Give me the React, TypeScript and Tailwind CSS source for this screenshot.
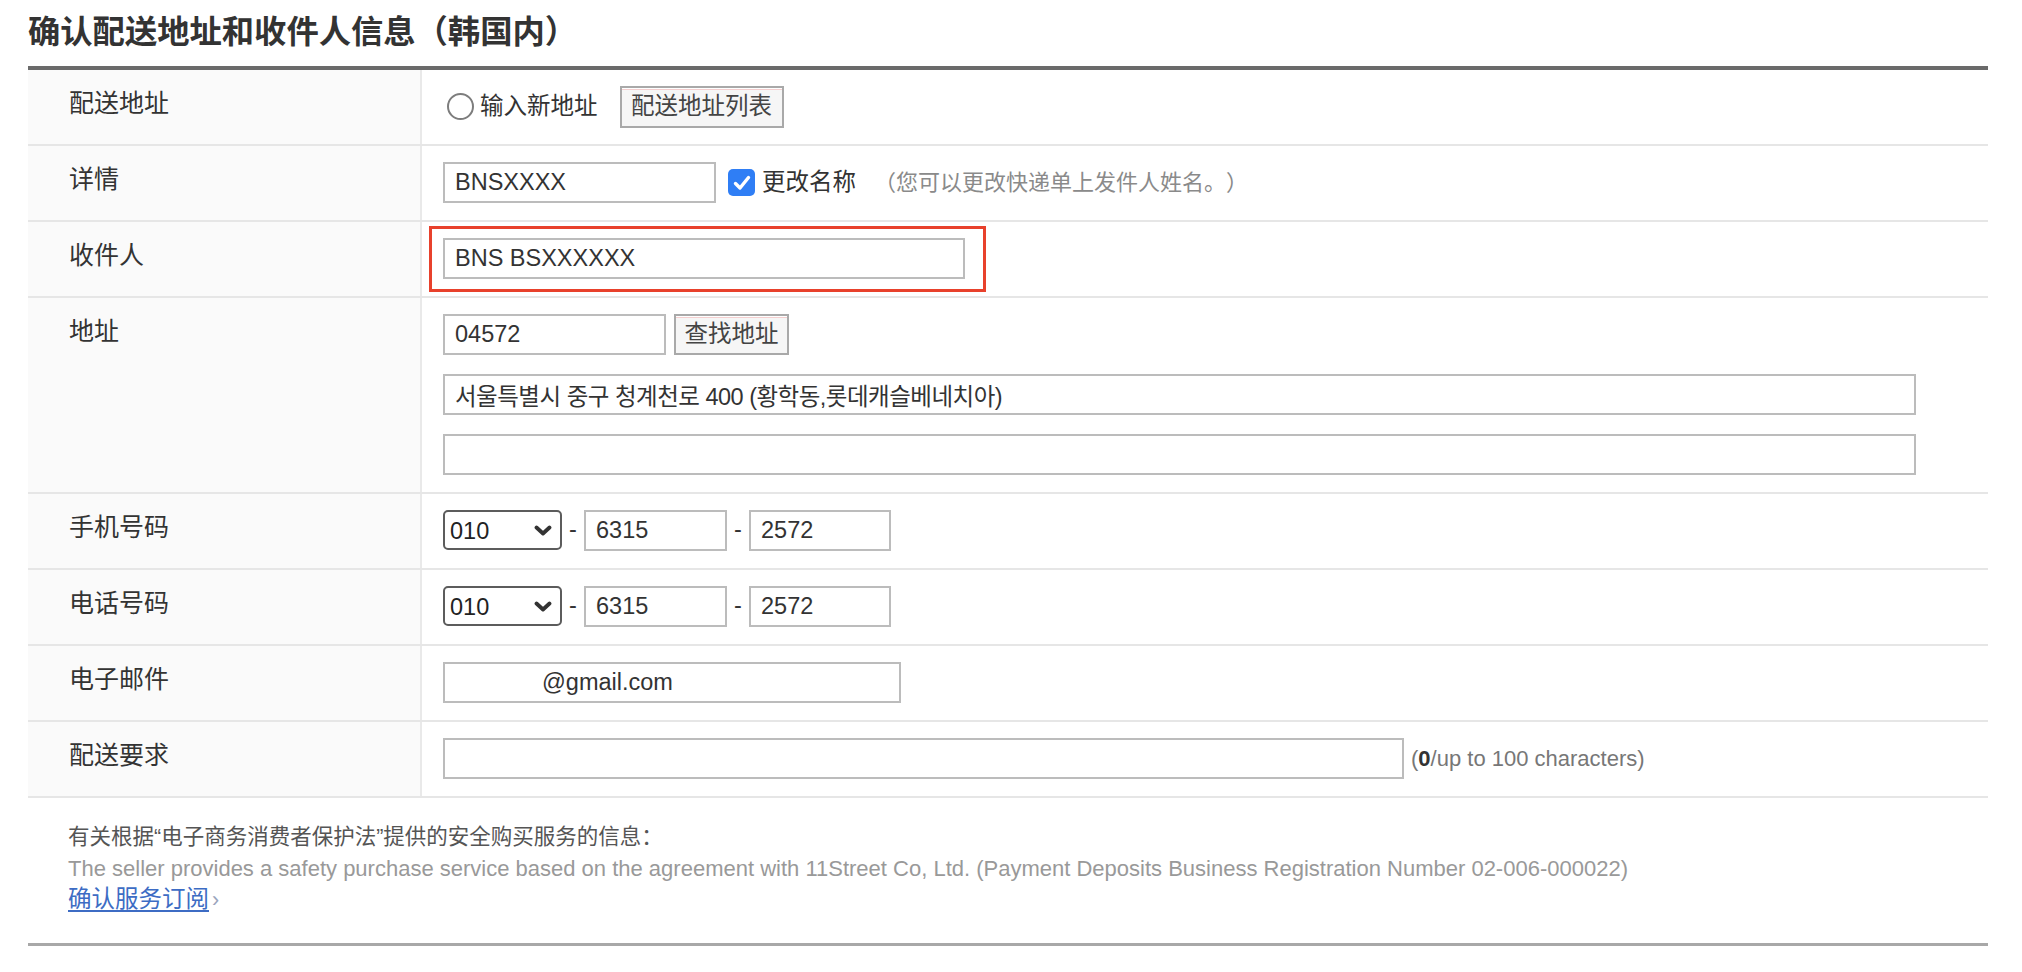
import React from "react";

const FONT = { fontFamily: '"Liberation Sans", "Noto Sans CJK SC", "Noto Sans CJK KR", sans-serif' };

function Label({ children }: { children: React.ReactNode }) {
  return (
    <div className="w-[394px] shrink-0 border-r-2 border-[#e9e9e9] bg-[#fafafa] pl-[41px] pt-[18px] text-[25px] leading-[30px] text-[#333]">
      {children}
    </div>
  );
}

function Row({ label, children, tall }: { label: string; children: React.ReactNode; tall?: boolean }) {
  return (
    <div className={`flex border-b-2 border-[#e6e6e6] ${tall ? "h-[196px]" : "h-[76px]"}`}>
      <Label>{label}</Label>
      <div className="flex-1 pl-[21px]">{children}</div>
    </div>
  );
}

function TextBox({ value, className = "", pad = "pl-[10px]" }: { value?: string; className?: string; pad?: string }) {
  return (
    <input
      readOnly
      value={value ?? ""}
      className={`h-[41px] border-2 border-[#bcbcbc] bg-white ${pad} pr-[10px] text-[23.5px] text-[#333] outline-none ${className}`}
      style={FONT}
    />
  );
}

function GrayButton({ children, className = "" }: { children: React.ReactNode; className?: string }) {
  return (
    <button
      className={`flex items-center justify-center border-2 border-[#a9a9a9] bg-[#f6f6f6] text-[23.5px] text-[#444] shadow-[inset_0_1px_0_#ffffff,inset_0_2px_0_#f4cfcf] ${className}`}
      style={FONT}
    >
      {children}
    </button>
  );
}

function PhoneSelect() {
  return (
    <div className="relative h-[40px] w-[119px]">
      <select
        className="h-full w-full appearance-none rounded-[5px] border-2 border-[#5c5c5c] bg-white pl-[5px] pt-[2px] text-[23.5px] text-[#222] outline-none"
        style={FONT}
        defaultValue="010"
      >
        <option value="010">010</option>
        <option value="011">011</option>
        <option value="016">016</option>
      </select>
      <svg className="pointer-events-none absolute right-[10px] top-[15px]" width="18" height="11" viewBox="0 0 18 11">
        <polyline points="2.5,2.5 9,8.5 15.5,2.5" fill="none" stroke="#333" strokeWidth="3.8" strokeLinecap="round" strokeLinejoin="round" />
      </svg>
    </div>
  );
}

function PhoneRow({ label }: { label: string }) {
  return (
    <Row label={label}>
      <div className="flex h-full items-center pb-[2px] text-[23.5px] text-[#333]">
        <PhoneSelect />
        <span className="w-[22px] text-center">-</span>
        <TextBox value="6315" className="w-[143px]" />
        <span className="w-[22px] text-center">-</span>
        <TextBox value="2572" className="w-[142px]" />
      </div>
    </Row>
  );
}

export default function App() {
  return (
    <div className="min-h-[972px] w-[2022px] bg-white pl-[28px] pt-[14px] [text-spacing-trim:space-all]" style={FONT}>
      <div className="w-[1960px]">
        <h1 className="h-[36px] text-[32.3px] font-bold leading-[36px] text-[#333]">确认配送地址和收件人信息（韩国内）</h1>
        <div className="mt-[16px] h-[4px] bg-[#6a6a6a]" />

        <Row label="配送地址">
          <div className="flex h-full items-center pb-[1px] text-[23.5px] text-[#333]">
            <div className="ml-[4px] h-[27px] w-[27px] rounded-full border-2 border-[#7d7d7d] bg-white" />
            <span className="ml-[6px]">输入新地址</span>
            <GrayButton className="ml-[22px] h-[42px] w-[164px]">配送地址列表</GrayButton>
          </div>
        </Row>

        <Row label="详情">
          <div className="flex h-full items-center pb-[1px] text-[23.5px] text-[#333]">
            <TextBox value="BNSXXXX" className="w-[273px]" />
            <div className="ml-[12px] flex h-[27px] w-[27px] items-center justify-center rounded-[5px] bg-[#2f7ef5]">
              <svg width="20" height="18" viewBox="0 0 20 18">
                <polyline points="3.5,9.5 8,14 16.5,3.5" fill="none" stroke="#fff" strokeWidth="3.4" strokeLinecap="round" strokeLinejoin="round" />
              </svg>
            </div>
            <span className="ml-[7px]">更改名称</span>
            <span className="ml-[18px] text-[22px] text-[#8a8a8a]">（您可以更改快递单上发件人姓名。）</span>
          </div>
        </Row>

        <Row label="收件人">
          <div className="flex h-full items-center pb-[1px]">
            <div className="relative">
              <TextBox value="BNS BSXXXXXX" className="w-[522px]" />
              <div className="pointer-events-none absolute -bottom-[13px] -left-[14px] -right-[21px] -top-[12px] border-[3px] border-[#e8412c]" />
            </div>
          </div>
        </Row>

        <Row label="地址" tall>
          <div className="flex flex-col gap-[19px] pt-[16px]">
            <div className="flex gap-[8px]">
              <TextBox value="04572" className="w-[223px]" />
              <GrayButton className="h-[41px] w-[115px]">查找地址</GrayButton>
            </div>
            <TextBox value="서울특별시 중구 청계천로 400 (황학동,롯데캐슬베네치아)" className="w-[1473px] tracking-[-0.5px]" />
            <TextBox value="" className="w-[1473px]" />
          </div>
        </Row>

        <PhoneRow label="手机号码" />
        <PhoneRow label="电话号码" />

        <Row label="电子邮件">
          <div className="flex h-full items-center pb-[1px]">
            <TextBox value="@gmail.com" className="w-[458px]" pad="pl-[97px]" />
          </div>
        </Row>

        <Row label="配送要求">
          <div className="flex h-full items-center pb-[1px]">
            <TextBox value="" className="w-[961px]" />
            <span className="ml-[7px] text-[22px] text-[#777]">
              (<b className="text-[#333]">0</b>/up to 100 characters)
            </span>
          </div>
        </Row>

        <div className="border-b-[3px] border-[#a8a8a8] pb-[27px] pl-[40px] pt-[24px] text-[21.5px] leading-[31px]">
          <p className="text-[#555]">有关根据“电子商务消费者保护法”提供的安全购买服务的信息：</p>
          <p className="text-[22px] text-[#999]">
            The seller provides a safety purchase service based on the agreement with 11Street Co, Ltd. (Payment Deposits Business Registration Number 02-006-000022)
          </p>
          <p>
            <a href="#" className="text-[23.5px] text-[#3d6cc4] underline underline-offset-[3px]">确认服务订阅</a>
            <span className="ml-[3px] text-[#9aa4bd]">›</span>
          </p>
        </div>
      </div>
    </div>
  );
}
